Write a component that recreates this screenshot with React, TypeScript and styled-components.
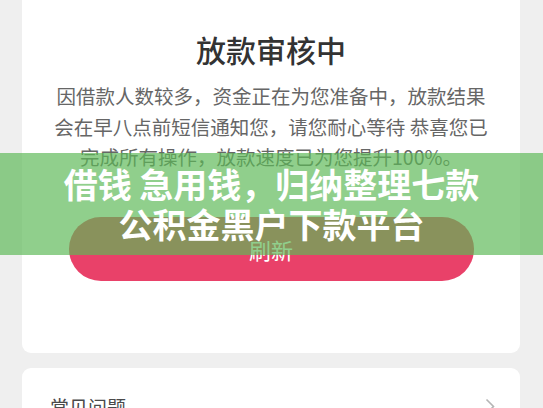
import React from 'react';
import styled, { createGlobalStyle } from 'styled-components';

const GlobalStyle = createGlobalStyle`
  html, body {
    margin: 0;
    padding: 0;
    background: #efefef;
    overflow: hidden;
  }
  body {
    font-family: "Noto Sans CJK SC", "Noto Sans", sans-serif;
  }
`;

const Page = styled.div`
  position: relative;
  width: 543px;
  height: 408px;
  overflow: hidden;
  padding: 0 23px 0 22px;
  box-sizing: border-box;
  display: flex;
  flex-direction: column;
  gap: 15px;
`;

const Card = styled.div`
  background: #ffffff;
  border-radius: 0 0 9px 9px;
  padding: 28px 0 72px;
  display: flex;
  flex-direction: column;
  align-items: center;
`;

const Title = styled.h1`
  margin: 0;
  font-size: 30px;
  line-height: 42px;
  font-weight: 500;
  color: #333333;
`;

const Message = styled.p`
  margin: 11px 0 0;
  font-size: 19.5px;
  line-height: 30.5px;
  color: #666666;
  text-align: center;
  white-space: nowrap;
`;

const RefreshButton = styled.button`
  margin-top: 44px;
  width: 405px;
  height: 64px;
  border: none;
  border-radius: 32px;
  background: #e94169;
  color: #ffffff;
  font-family: inherit;
  font-size: 22px;
  cursor: pointer;
`;

const FaqCard = styled.div`
  background: #ffffff;
  border-radius: 9px;
  padding: 25px 25px 20px 28px;
  display: flex;
  align-items: center;
  justify-content: space-between;
`;

const FaqLabel = styled.span`
  font-size: 19px;
  line-height: 28px;
  color: #4a4a4a;
`;

const Banner = styled.div`
  position: absolute;
  left: 0;
  right: 0;
  top: 153px;
  height: 102px;
  background: rgba(92, 184, 86, 0.68);
  display: flex;
  flex-direction: column;
  align-items: center;
  justify-content: center;
`;

const BannerLine = styled.div`
  font-size: 34px;
  line-height: 40px;
  font-weight: 700;
  color: #ffffff;
  white-space: pre;
`;

const Chevron = () => (
  <svg width="10" height="17" viewBox="0 0 10 17">
    <path d="M1.5 1.5 L8.5 8.5 L1.5 15.5" fill="none" stroke="#b5b5b5" strokeWidth="1.6" />
  </svg>
);

export default function App() {
  return (
    <>
      <GlobalStyle />
      <Page>
        <Card>
          <Title>放款审核中</Title>
          <Message>
            因借款人数较多，资金正在为您准备中，放款结果
            <br />
            会在早八点前短信通知您，请您耐心等待 恭喜您已
            <br />
            完成所有操作，放款速度已为您提升100%。
          </Message>
          <RefreshButton>刷新</RefreshButton>
        </Card>
        <FaqCard>
          <FaqLabel>常见问题</FaqLabel>
          <Chevron />
        </FaqCard>
        <Banner>
          <BannerLine>借钱 急用钱，归纳整理七款</BannerLine>
          <BannerLine>公积金黑户下款平台</BannerLine>
        </Banner>
      </Page>
    </>
  );
}
